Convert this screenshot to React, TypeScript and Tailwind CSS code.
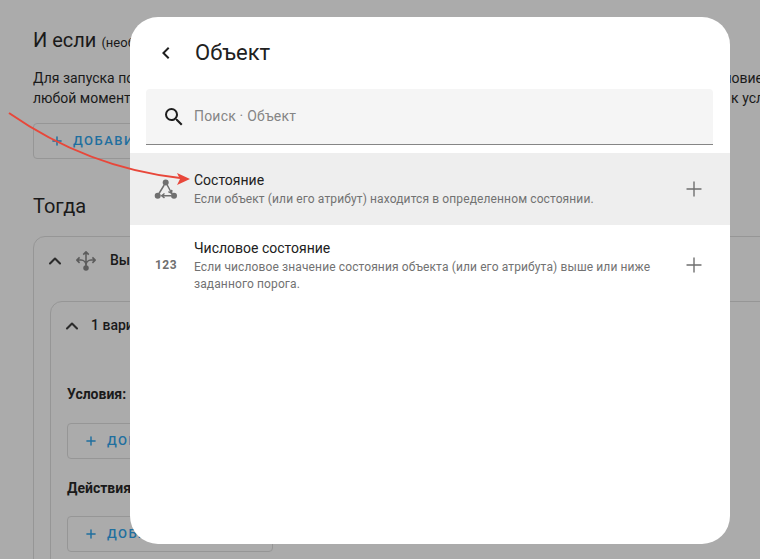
import { Plus, ChevronUp } from "lucide-react";

function Move() {
  return (
    <svg viewBox="0 0 24 24" width="22" height="22" fill="none" stroke="#5c5c5c" strokeWidth="1.700" strokeLinejoin="round">
      <path d="M12 2v16M9 5l3-3 3 3M2 11h4.500c3 0 5.500 2.500 5.500 6M22 11h-4.500c-3 0-5.500 2.500-5.500 6M5 8l-3 3 3 3M19 8l3 3-3 3" />
      <circle cx="12" cy="19.500" r="3" fill="#5c5c5c" stroke="none" />
    </svg>
  );
}

function StateIcon() {
  return (
    <svg viewBox="0 0 24 24" width="24" height="24" fill="none" stroke="#6f6f6f" strokeWidth="1.500">
      <circle cx="11.700" cy="5.500" r="3" fill="#6f6f6f" stroke="none" />
      <circle cx="3.700" cy="18.700" r="3" fill="#6f6f6f" stroke="none" />
      <circle cx="20" cy="18.700" r="3" fill="#6f6f6f" stroke="none" />
      <path d="M10.200 8 5 16.500M13.200 8l3.800 7M8 18.700h9" />
      <path d="M14.400 14.600l3.200 1.700.2-3.400M10.500 16.500l-2.800 2.200 2.800 2.200" />
    </svg>
  );
}

function Magnify() {
  return (
    <svg viewBox="0 0 24 24" width="24" height="24" fill="#1f1f1f">
      <path d="M9.500,3A6.500,6.500 0 0,1 16,9.500C16,11.110 15.410,12.590 14.440,13.730L14.710,14H15.500L20.500,19L19,20.500L14,15.500V14.710L13.730,14.440C12.590,15.410 11.110,16 9.500,16A6.500,6.500 0 0,1 3,9.500A6.500,6.500 0 0,1 9.500,3M9.500,5C7,5 5,7 5,9.500C5,12 7,14 9.500,14C12,14 14,12 14,9.500C14,7 12,5 9.500,5Z" />
    </svg>
  );
}

function Back() {
  return (
    <svg viewBox="0 0 24 24" width="24" height="24" fill="#1f1f1f">
      <path d="M15.410,16.580L10.830,12L15.410,7.410L14,6L8,12L14,18L15.410,16.580Z" />
    </svg>
  );
}

function OutlineButton({ label }: { label: string }) {
  return (
    <div className="flex items-center h-[36px] w-[206px] border border-[#969696] rounded-[4px] pl-[16px] text-[#1f6f9f] text-[13px] font-medium tracking-[1.5px] shrink-0">
      <Plus size={14} strokeWidth={2.500} className="mr-[9px]" />
      {label}
    </div>
  );
}

function Option({ title, text, icon, active }: { title: string; text: React.ReactNode; icon: React.ReactNode; active?: boolean }) {
  return (
    <div className={`flex items-center pl-[24px] pr-[24px] ${active ? "bg-[#eeeeee] h-[72px]" : "h-[80px]"}`}>
      <div className="w-[24px] h-[24px] mr-[16px] flex items-center justify-center shrink-0">{icon}</div>
      <div className="flex-1 min-w-0">
        <div className="text-[14px] leading-[20px] text-[#212121]">{title}</div>
        <div className="mt-[1px] text-[12px] leading-[17px] text-[#727272] tracking-[0.12px]">{text}</div>
      </div>
      <Plus size={24} strokeWidth={1.400} className="text-[#6f6f6f] ml-[16px] shrink-0" />
    </div>
  );
}

export default function App() {
  return (
    <div className="relative w-[760px] h-[559px] overflow-hidden bg-[#ababab] text-[#1a1a1a] font-['Roboto',sans-serif]">
      {/* page behind the dialog */}
      <div className="pl-[33px] pt-[26px]">
        <div className="h-[28px] text-[20px] leading-[28px] whitespace-nowrap">
          И если <span className="text-[13px]">(необязательно)</span>
        </div>
        <p className="mt-[14px] text-[14px] leading-[20px] whitespace-nowrap">
          Для запуска последовательности действий должно выполняться каждое указанное дополнительное условие
        </p>
        <p className="text-[14px] leading-[20px] whitespace-nowrap">
          любой момент будет проверено, и действия будут выполняться только, в том случае, если это относится к условиям
        </p>
        <div className="mt-[15px]">
          <OutlineButton label="ДОБАВИТЬ УСЛОВИЕ" />
        </div>
        <div className="mt-[33px] text-[20px] leading-[28px]">Тогда</div>
        <div className="mt-[16px] border border-[#969696] rounded-tl-[12px] w-[760px] pl-[16px] h-[340px]">
          <div className="flex items-center h-[47px] ml-[-5px]">
            <ChevronUp size={20} strokeWidth={2.500} className="text-[#2b2b2b] mr-[10px]" />
            <Move />
            <span className="ml-[13px] text-[14px] font-medium">Выбор</span>
          </div>
          <div className="mt-[17px] border border-[#969696] rounded-tl-[12px] pl-[16px] h-[300px]">
            <div className="flex items-center h-[47px] ml-[-5px]">
              <ChevronUp size={20} strokeWidth={2.500} className="text-[#2b2b2b] mr-[9px]" />
              <span className="text-[14px] font-medium">1 вариант</span>
            </div>
            <div className="mt-[35px] text-[14px] leading-[20px] font-bold">Условия:</div>
            <div className="mt-[19px]"><OutlineButton label="ДОБАВИТЬ" /></div>
            <div className="mt-[19px] text-[14px] leading-[20px] font-bold">Действия:</div>
            <div className="mt-[18px]"><OutlineButton label="ДОБАВИТЬ" /></div>
          </div>
        </div>
      </div>

      {/* dialog */}
      <div className="absolute left-[130px] top-[17px] w-[600px] h-[527px] bg-white rounded-[28px] overflow-hidden">
        <div className="flex items-center h-[72px] pl-[24px]">
          <Back />
          <span className="ml-[17px] text-[22px] leading-[28px] text-[#212121]">Объект</span>
        </div>
        <div className="ml-[16px] mr-[17px] h-[56px] bg-[#f5f5f5] border-b border-[#858585] rounded-t-[4px] flex items-center pl-[16px]">
          <Magnify />
          <span className="ml-[8px] text-[14px] text-[#858585] tracking-[0.2px]">Поиск · Объект</span>
        </div>
        <div className="mt-[8px]">
          <Option
            active
            title="Состояние"
            text="Если объект (или его атрибут) находится в определенном состоянии."
            icon={<StateIcon />}
          />
          <Option
            title="Числовое состояние"
            text={<>Если числовое значение состояния объекта (или его атрибута) выше или ниже<br />заданного порога.</>}
            icon={<span className="text-[12px] font-bold text-[#6f6f6f] tracking-[0.4px]">123</span>}
          />
        </div>
      </div>

      {/* annotation arrow */}
      <svg className="absolute left-0 top-0 pointer-events-none" width="760" height="559" fill="none">
        <path d="M9 113C55 145 110 170 180 178" stroke="#e8473a" strokeWidth="2" />
        <path d="M177 173L190 179L177 185L180 179Z" fill="#e8473a" />
      </svg>
    </div>
  );
}
